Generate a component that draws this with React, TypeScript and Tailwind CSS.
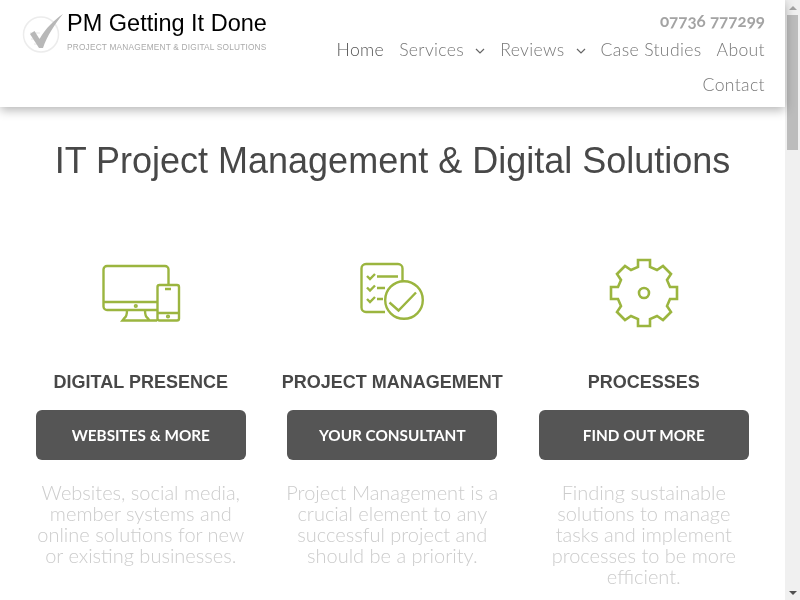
const green = "#9bb53f";

const items = [
  {
    title: "DIGITAL PRESENCE",
    button: "WEBSITES & MORE",
    text: "Websites, social media, member systems and online solutions for new or existing businesses.",
    icon: <DevicesIcon />,
  },
  {
    title: "PROJECT MANAGEMENT",
    button: "YOUR CONSULTANT",
    text: "Project Management is a crucial element to any successful project and should be a priority.",
    icon: <ChecklistIcon />,
  },
  {
    title: "PROCESSES",
    button: "FIND OUT MORE",
    text: "Finding sustainable solutions to manage tasks and implement processes to be more efficient.",
    icon: <GearIcon />,
  },
];

function DevicesIcon() {
  return (
    <svg width="82" height="62" viewBox="100 262 82 62" fill="none" stroke={green} strokeWidth="2.4">
      <path d="M157 310H107a3.500 3.500 0 0 1-3.500-3.500V269.500a3.500 3.500 0 0 1 3.500-3.500h58a3.500 3.500 0 0 1 3.500 3.500V285" />
      <path d="M104 302h53" />
      <path d="M127 310c0 4-1 7-2.500 8l-2 2.500h34.500M145 310c0 4 1 7 2.500 8l2 2.500" />
      <rect x="157.500" y="285" width="21.500" height="35.500" rx="2" />
      <path d="M158 313h21M165 289h6" />
      <circle cx="168" cy="316.500" r="0.9" />
      <circle cx="135.800" cy="306" r="0.9" />
    </svg>
  );
}

function ChecklistIcon() {
  return (
    <svg width="66" height="64" viewBox="359 262 66 64" fill="none" stroke={green} strokeWidth="2.4">
      <path d="M385 313H366a4.500 4.500 0 0 1-4.500-4.500V269.500a4.500 4.500 0 0 1 4.500-4.500h32a4.500 4.500 0 0 1 4.500 4.500V282" />
      <path d="M367 277l3 3 5-5M367 288.500l3 3 5-5M367 300l3 3 5-5" />
      <path d="M377 277.500h21M377 289h8M377 300h6" />
      <circle cx="404" cy="301" r="18.800" />
      <path d="M389.500 303.500l9 8 17.500-18" />
    </svg>
  );
}

function GearIcon() {
  return (
    <svg width="70" height="70" viewBox="0 0 70 70" fill="none" stroke={green} strokeWidth="2.600">
      <path d="M29 2h12v7l7 3 6-4 8 8-4 6 3 7h7v12h-7l-3 7 4 6-8 8-6-4-7 3v7H29v-7l-7-3-6 4-8-8 4-6-3-7H2V29h7l3-7-4-6 8-8 6 4 7-3z" />
      <circle cx="35" cy="35" r="5" />
    </svg>
  );
}

function Chevron() {
  return (
    <svg width="10" height="6" viewBox="0 0 10 6" fill="none" stroke="#666" strokeWidth="1.2" className="ml-[11px] mt-0.5">
      <path d="M1 1l4 4 4-4" />
    </svg>
  );
}

function Logo() {
  return (
    <div className="flex">
      <svg width="46" height="44" viewBox="20 10 46 44" fill="none" className="mt-[10px] ml-[20px]">
        <circle cx="41" cy="34.500" r="17.500" stroke="#ececec" strokeWidth="1.500" />
        <path d="M30 33h10M31 39h12M34 44h9" stroke="#e6e6e6" strokeWidth="1" />
        <path d="M30 34l4.500-3 5 8C46 28 54 20 63 14 55 24 47 36 43 48h-4z" fill="#b8b8b8" />
      </svg>
      <div className="ml-[1px] mt-[9px] will-change-transform">
        <div className="text-[23.500px] leading-[28px] text-black font-['Liberation_Sans',sans-serif]">PM Getting It Done</div>
        <div className="mt-[4px] text-[8.300px] leading-[12px] text-[#aaa] tracking-[0.200px] font-['Liberation_Sans',sans-serif]">PROJECT MANAGEMENT &amp; DIGITAL SOLUTIONS</div>
      </div>
    </div>
  );
}

function Scrollbar() {
  return (
    <aside className="flex h-full w-[15px] shrink-0 flex-col items-center bg-[#f0f0f0]">
      <div className="flex h-[15px] items-center justify-center">
        <div className="h-0 w-0 border-x-[4px] border-b-[4px] border-x-transparent border-b-[#a3a3a3]" />
      </div>
      <div className="h-[135px] w-[11px] bg-[#bcbcbc]" />
      <div className="flex-1" />
      <div className="flex h-[15px] items-center justify-center">
        <div className="h-0 w-0 border-x-[4px] border-t-[4px] border-x-transparent border-t-[#505050]" />
      </div>
    </aside>
  );
}

export default function App() {
  return (
    <div className="flex h-screen overflow-hidden bg-white font-['Lato',sans-serif]">
      <div className="w-[785px] shrink-0">
        <header className="relative flex h-[107px] justify-between bg-white shadow-[0_3px_10px_rgba(0,0,0,0.3)]">
          <Logo />
          <div className="flex flex-col items-end pr-[20px] pt-[10px] text-[#777] will-change-transform">
            <div className="text-[17px] leading-[22px] font-bold text-[#a3a3a3] oldstyle-nums">07736 777299</div>
            <nav className="flex w-[450px] flex-wrap justify-end text-[17.600px] font-light leading-[35px] tracking-[0.350px]">
              <a className="text-[#555]">Home</a>
              <a className="ml-[15px] flex items-center">Services<Chevron /></a>
              <a className="ml-[15px] flex items-center">Reviews<Chevron /></a>
              <a className="ml-[15px]">Case Studies</a>
              <a className="ml-[15px]">About</a>
              <a className="ml-[15px]">Contact</a>
            </nav>
          </div>
        </header>
        <main className="px-[35.800px] will-change-transform">
          <h1 className="pt-[32px] text-center text-[36px] leading-[44px] text-[#484848] font-['Liberation_Sans',sans-serif]">
            IT Project Management &amp; Digital Solutions
          </h1>
          <div className="mt-[75px] grid w-[713px] grid-cols-3 gap-x-[41.500px]">
            {items.map((item) => (
              <div key={item.title} className="flex flex-col items-center text-center">
                <div className="flex h-[70px] items-center">{item.icon}</div>
                <h2 className="mt-[42px] whitespace-nowrap text-[18px] leading-[24px] font-bold text-[#484848] font-['Liberation_Sans',sans-serif]">{item.title}</h2>
                <a className="mt-[16px] flex h-[50px] w-[210px] items-center justify-center rounded-[6px] bg-[#555] text-[15.300px] font-bold text-white">{item.button}</a>
                <p className="-mx-[4px] mt-[22px] text-[20px] font-light leading-[21px] text-[#ccc]">{item.text}</p>
              </div>
            ))}
          </div>
        </main>
      </div>
      <Scrollbar />
    </div>
  );
}
